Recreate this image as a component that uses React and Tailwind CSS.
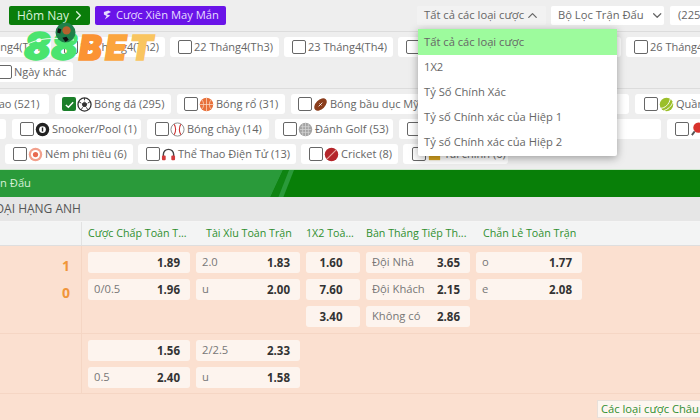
import { ChevronRight, ChevronUp, ChevronDown } from 'lucide-react'

const font = { fontFamily: '"Open Sans", sans-serif' }

// small sport icons
const Ball = () => (
  <svg viewBox="0 0 16 16" className="w-[15px] h-[15px] shrink-0">
    <circle cx="8" cy="8" r="7" fill="#fff" stroke="#333" strokeWidth="1.4" />
    <path d="M8 5.5l2.4 1.7-.9 2.8H6.5l-.9-2.800zM8 1v2.500M2 5l2.500 1.500M14 5l-2.500 1.500M4.500 13.500l1.500-2.500M11.500 13.500l-1.500-2.500" fill="#333" stroke="#333" />
  </svg>
)
const Basket = () => (
  <svg viewBox="0 0 16 16" className="w-[15px] h-[15px] shrink-0">
    <circle cx="8" cy="8" r="7.200" fill="#e8703a" />
    <path d="M8 1v14M1 8h14M3 3c2.500 2.500 2.500 7.500 0 10M13 3c-2.500 2.500-2.500 7.500 0 10" fill="none" stroke="#fbd9c4" strokeWidth=".8" />
  </svg>
)
const Football = () => (
  <svg viewBox="0 0 16 16" className="w-[15px] h-[15px] shrink-0">
    <ellipse cx="8" cy="8" rx="8" ry="5" transform="rotate(-45 8 8)" fill="#8a3d1c" />
    <path d="M6 10l4-4M7 7l2 2" stroke="#fff" strokeWidth=".9" />
  </svg>
)
const Tennis = () => (
  <svg viewBox="0 0 16 16" className="w-[15px] h-[15px] shrink-0">
    <circle cx="8" cy="8" r="7.200" fill="#9bbf2a" />
    <path d="M2 12c4 0 9-4 10-10M5 14.500c4-1 9-5 9.500-9" fill="none" stroke="#fff" strokeWidth="1" />
  </svg>
)
const Snooker = () => (
  <svg viewBox="0 0 16 16" className="w-[15px] h-[15px] shrink-0">
    <circle cx="8" cy="8" r="7.200" fill="#222" />
    <circle cx="8" cy="8" r="3.600" fill="#fff" />
    <path d="M8 5.800v4.400" stroke="#222" strokeWidth="1.500" />
  </svg>
)
const Baseball = () => (
  <svg viewBox="0 0 16 16" className="w-[15px] h-[15px] shrink-0">
    <circle cx="8" cy="8" r="7" fill="#fff" stroke="#888" />
    <path d="M4.500 2.500c2 3 2 8 0 11M11.500 2.500c-2 3-2 8 0 11" fill="none" stroke="#c33" strokeWidth="1.200" />
  </svg>
)
const Golf = () => (
  <svg viewBox="0 0 16 16" className="w-[15px] h-[15px] shrink-0">
    <circle cx="8" cy="8" r="7.200" fill="#a3a3a3" />
    <path d="M3 5h10M2 8h12M3 11h10M5 2v12M8 1v14M11 2v12" stroke="#d4d4d4" strokeWidth=".8" />
  </svg>
)
const Dart = () => (
  <svg viewBox="0 0 16 16" className="w-[15px] h-[15px] shrink-0">
    <circle cx="8" cy="8" r="7.200" fill="#f2a08c" />
    <circle cx="8" cy="8" r="4.800" fill="#fff" />
    <circle cx="8" cy="8" r="2.800" fill="#e86a50" />
  </svg>
)
const Headset = () => (
  <svg viewBox="0 0 16 16" className="w-[15px] h-[15px] shrink-0">
    <path d="M2.500 10V8a5.500 5.500 0 0111 0v2" fill="none" stroke="#444" strokeWidth="1.500" />
    <rect x="1" y="9" width="4" height="5" rx="1" fill="#d23b3b" />
    <rect x="11" y="9" width="4" height="5" rx="1" fill="#d23b3b" />
  </svg>
)
const Cricket = () => (
  <svg viewBox="0 0 16 16" className="w-[15px] h-[15px] shrink-0">
    <circle cx="8" cy="8" r="7.200" fill="#b5262b" />
    <path d="M3 13L13 3" stroke="#e9a7a0" strokeWidth="1.200" />
  </svg>
)
const Ping = () => (
  <svg viewBox="0 0 16 16" className="w-[15px] h-[15px] shrink-0">
    <circle cx="9" cy="6" r="5.500" fill="#d8322c" />
    <path d="M5 10l-3 4" stroke="#555" strokeWidth="2" />
  </svg>
)
const Coin = () => (
  <svg viewBox="0 0 16 16" className="w-[15px] h-[15px] shrink-0">
    <rect x="2" y="8" width="12" height="6" fill="#d9a520" />
    <rect x="4" y="4" width="8" height="4" fill="#efc64a" />
  </svg>
)

function Check({ on }) {
  if (on) {
    return (
      <span className="w-[14px] h-[14px] shrink-0 rounded-[2px] bg-[#1b7f2a] flex items-center justify-center">
        <svg viewBox="0 0 12 12" className="w-[11px] h-[11px]">
          <path d="M2 6.500l2.800 2.500L10 3.500" fill="none" stroke="#fff" strokeWidth="1.600" />
        </svg>
      </span>
    )
  }
  return <span className="w-[14px] h-[14px] shrink-0 rounded-[2px] border border-[#666] bg-white" />
}

function Chip({ w, label, icon, on, pad = 'pl-[8px]' }) {
  return (
    <div
      className={`${w} ${pad} h-[20px] shrink-0 bg-white rounded-[3px] flex items-center gap-[1px] text-[11px] text-[#666] whitespace-nowrap overflow-hidden`}
    >
      <Check on={on} />
      {icon}
      <span className="ml-[1px]">{label}</span>
    </div>
  )
}

function Odd({ label, value, center }) {
  return (
    <div
      className={`h-[21px] bg-[#fdf4ee] rounded-[3px] flex items-center text-[11.200px] px-[6px] ${center ? 'justify-center' : 'justify-between'}`}
    >
      {!center && <span className="text-[#777]">{label}</span>}
      <span className="font-bold text-[#333] text-[11.500px] pr-[4px]">{value}</span>
    </div>
  )
}

const Blank = () => <div className="h-[21px]" />

export default function App() {
  return (
    <div style={font} className="relative w-[700px] h-[420px] overflow-hidden bg-[#eeeeee]">

      {/* top toolbar */}
      <div className="h-[32px] flex items-center border-b border-[#dcdcdc] text-[11.200px] pl-[9px] whitespace-nowrap">
        <div className="w-[81px] h-[19px] shrink-0 bg-[#0a7d0a] rounded-[2px] text-[#d9f2d9] flex items-center justify-between pl-[8px] pr-[4px] text-[12px]">
          Hôm Nay
          <ChevronRight size={15} strokeWidth={2.200} />
        </div>
        <div className="ml-[5px] w-[131px] h-[19px] shrink-0 bg-[#6a14e8] rounded-[2px] text-[#e6dcff] flex items-center pl-[8px] gap-[4px]">
          <svg viewBox="0 0 10 12" className="w-[9px] h-[11px]">
            <path d="M1 2l5-1.500 3 1.500-5 2.500 4 1.500-6 4.500 2-4-3-1.500z" fill="#e6dcff" />
          </svg>
          Cược Xiên May Mắn
        </div>
        <div className="ml-[191px] w-[129px] h-[19px] shrink-0 bg-[#f2f2f2] rounded-[2px] text-[#666] flex items-center pl-[7px] gap-[1px]">
          Tất cả các loại cược
          <ChevronUp size={15} />
        </div>
        <div className="ml-[5px] w-[113px] h-[19px] shrink-0 bg-white rounded-[2px] text-[#666] flex items-center pl-[7px] gap-[6px]">
          Bộ Lọc Trận Đấu
          <ChevronDown size={15} />
        </div>
        <div className="ml-[6px] w-[60px] h-[19px] shrink-0 bg-white rounded-[2px] text-[#666] flex items-center pl-[8px]">
          (225
        </div>
      </div>

      {/* date filters */}
      <div className="h-[57px] border-b border-[#dcdcdc] pt-[5px] flex flex-col gap-[5px]">
        <div className="flex gap-[5px] -ml-[58px]">
          <Chip w="w-[109px]" label="20 Tháng4(Th1)" />
          <Chip w="w-[109px]" label="21 Tháng4(Th2)" />
          <Chip w="w-[109px]" label="22 Tháng4(Th3)" />
          <Chip w="w-[109px]" label="23 Tháng4(Th4)" />
          <Chip w="w-[109px]" label="24 Tháng4(Th5)" />
          <Chip w="w-[109px]" label="25 Tháng4(Th6)" />
          <Chip w="w-[109px]" label="26 Tháng4(Th7)" />
        </div>
        <div className="flex -ml-[10px]">
          <Chip w="w-[83px]" label="Ngày khác" />
        </div>
      </div>

      {/* sports */}
      <div className="h-[80px] pt-[5px] flex flex-col gap-[5px]">
        <div className="flex gap-[6px] -ml-[70px]">
          <Chip w="w-[119px]" label="Thể Thao (521)" pad="pl-[18px]" />
          <Chip w="w-[116px]" label="Bóng đá (295)" icon={<Ball />} on pad="pl-[7px]" />
          <Chip w="w-[108px]" label="Bóng rổ (31)" icon={<Basket />} pad="pl-[7px]" />
          <Chip w="w-[338px]" label="Bóng bầu dục Mỹ (9)" icon={<Football />} pad="pl-[7px]" />
          <Chip w="w-[100px]" label="Quần vợt (40)" icon={<Tennis />} pad="pl-[9px]" />
        </div>
        <div className="flex gap-[6px] -ml-[94px]">
          <Chip w="w-[100px]" label="Bi-a (3)" />
          <Chip w="w-[129px]" label="Snooker/Pool (1)" icon={<Snooker />} />
          <Chip w="w-[122px]" label="Bóng chày (14)" icon={<Baseball />} />
          <Chip w="w-[118px]" label="Đánh Golf (53)" icon={<Golf />} />
          <Chip w="w-[262px]" label="Cầu lông (5)" icon={<Basket />} />
          <Chip w="w-[100px]" label="Bóng bàn" icon={<Ping />} />
        </div>
        <div className="flex gap-[5px] ml-[5px]">
          <Chip w="w-[128px]" label="Ném phi tiêu (6)" icon={<Dart />} />
          <Chip w="w-[158px]" label="Thể Thao Điện Tử (13)" icon={<Headset />} />
          <Chip w="w-[97px]" label="Cricket (8)" icon={<Cricket />} />
          <Chip w="w-[105px]" label="Tài chính (6)" icon={<Coin />} pad="pl-[9px]" />
        </div>
      </div>

      {/* green title bar */}
      <div className="relative h-[28px] border-t border-[#cfe8cf] bg-[#087f08] overflow-hidden flex items-center text-[11.200px] text-[#d7f0d7]">
        <div className="h-full w-[271px] bg-[#2a9a3a] shrink-0 flex items-center -ml-[6px] pl-[6px]">
          n Đấu
        </div>
        <svg viewBox="0 0 35 28" className="absolute left-[265px] top-0 w-[35px] h-[28px]">
          <path d="M0 0H18L5 28H0z" fill="#2a9a3a" />
          <path d="M18 0h6L13 28H5z" fill="#0f8412" />
          <path d="M24 0h5L18 28h-5z" fill="#2a9a3a" />
        </svg>
      </div>

      {/* league title */}
      <div className="h-[25px] bg-[#e6e6e6] flex items-center text-[12px] text-[#555] border-b border-[#f5f5f5] -ml-[23px] whitespace-nowrap">
        NGOẠI HẠNG ANH
      </div>

      {/* market header */}
      <div className="h-[24px] bg-[#f3f4f4] border-b border-[#dedede] flex text-[10.700px] text-[#2f8f2f] whitespace-nowrap">
        <div className="w-[82px] border-r border-[#e2e2e2]" />
        <div className="w-[118px] pl-[6px] flex items-center">Cược Chấp Toàn T...</div>
        <div className="w-[106px] flex items-center pl-[6px]">Tài Xỉu Toàn Trận</div>
        <div className="w-[60px] flex items-center">1X2 Toà...</div>
        <div className="w-[117px] flex items-center">Bàn Thắng Tiếp Th...</div>
        <div className="flex items-center">Chẵn Lẻ Toàn Trận</div>
      </div>

      {/* match */}
      <div className="bg-[#fbe0d0] h-[174px]">
        <div className="h-[88px] flex border-b border-[#f5d6c4]">
          <div className="w-[82px] border-r border-[#f5d6c4] shrink-0 flex flex-col items-end pr-[11px] pt-[7px] text-[14px] font-bold text-[#f0953a] leading-[26.500px]">
            <span>1</span>
            <span>0</span>
          </div>
          <div className="grid grid-cols-[102px_104px_54px_104px_106px] gap-x-[6px] gap-y-[6px] pl-[6px] pt-[6px] content-start">
            <Odd value="1.89" />
            <Odd label="2.0" value="1.83" />
            <Odd value="1.60" center />
            <Odd label="Đội Nhà" value="3.65" />
            <Odd label="o" value="1.77" />
            <Odd label="0/0.5" value="1.96" />
            <Odd label="u" value="2.00" />
            <Odd value="7.60" center />
            <Odd label="Đội Khách" value="2.15" />
            <Odd label="e" value="2.08" />
            <Blank />
            <Blank />
            <Odd value="3.40" center />
            <Odd label="Không có" value="2.86" />
            <Blank />
          </div>
        </div>
        <div className="h-[60px] flex border-b border-[#f5d6c4]">
          <div className="w-[82px] border-r border-[#f5d6c4] shrink-0" />
          <div className="grid grid-cols-[102px_104px] gap-x-[6px] gap-y-[6px] pl-[6px] pt-[6px] content-start">
            <Odd value="1.56" />
            <Odd label="2/2.5" value="2.33" />
            <Odd label="0.5" value="2.40" />
            <Odd label="u" value="1.58" />
          </div>
        </div>
        <div className="flex justify-end pt-[6px] -mr-[30px]">
          <div className="w-[133px] h-[18px] bg-[#fdf6f0] border border-[#e8e0da] text-[11.200px] text-[#2f8f2f] flex items-center pl-[3px] whitespace-nowrap">
            Các loại cược Châu Á
          </div>
        </div>
      </div>

      {/* open bet type menu */}
      <div className="absolute left-[418px] top-[29px] w-[199px] h-[127px] bg-white shadow-[0_2px_8px_rgba(0,0,0,0.35)] rounded-b-[2px] text-[11.200px] text-[#666]">
        <div className="h-[26px] bg-[#9dfb9d] pl-[6px] flex items-center">Tất cả các loại cược</div>
        <div className="h-[25px] pl-[6px] flex items-center">1X2</div>
        <div className="h-[25px] pl-[6px] flex items-center">Tỷ Số Chính Xác</div>
        <div className="h-[25px] pl-[6px] flex items-center">Tỷ số Chính xác của Hiệp 1</div>
        <div className="h-[25px] pl-[6px] flex items-center">Tỷ số Chính xác của Hiệp 2</div>
      </div>

      {/* brand logo over the page */}
      <div
        className="absolute left-[24px] top-[30px] h-[32px] flex items-end italic font-black leading-none"
        style={{ fontFamily: 'Inter, sans-serif' }}
      >
        <span className="text-[39px] leading-[32px] text-[#4ae46f] tracking-[0.5px] [-webkit-text-stroke:1.500px_#4ae46f]">88</span>
        <span className="text-[34px] leading-[28px] tracking-[3.500px] pl-[1px]">
          <span className="text-[#fb9333] [-webkit-text-stroke:1.500px_#fb9333]">B</span>
          <span className="text-[#fba53e] [-webkit-text-stroke:1.500px_#fba53e]">E</span>
          <span className="text-[#f9c560] [-webkit-text-stroke:1.500px_#f9c560]">T</span>
        </span>
      </div>
      <svg viewBox="0 0 60 12" className="absolute left-[24px] top-[35px] w-[60px] h-[12px]">
        <path d="M2 10C14 3 30 2 50 5" fill="none" stroke="#eafbe9" strokeWidth="1" />
      </svg>
      <svg viewBox="0 0 20 20" className="absolute left-[55px] top-[22px] w-[21px] h-[21px]">
        <circle cx="10" cy="10" r="9.500" fill="#1f7f4a" />
        <circle cx="11" cy="8" r="4" fill="#b5622e" />
        <path d="M3 6l3 1-1 4-3-1zM7 15l4-1 2 3-3 2z" fill="#111" />
      </svg>
    </div>
  )
}
